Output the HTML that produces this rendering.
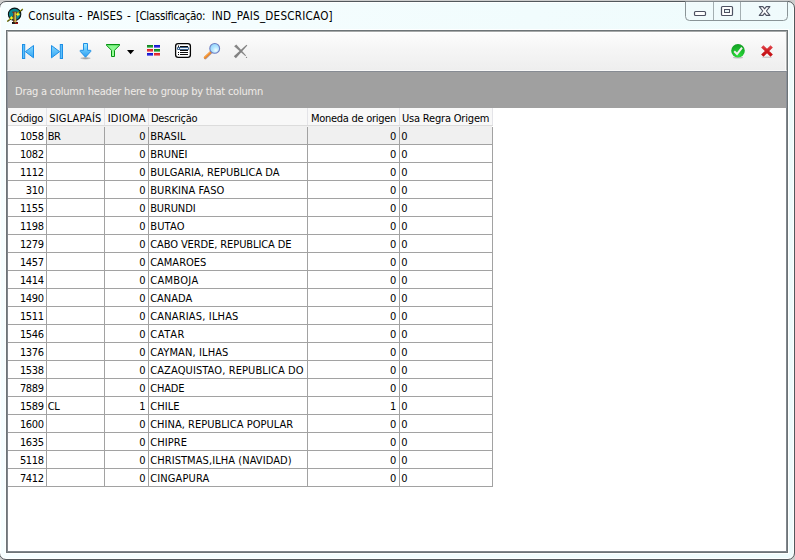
<!DOCTYPE html>
<html><head><meta charset="utf-8"><title>Consulta - PAISES</title>
<style>
html,body{margin:0;padding:0}
body{width:795px;height:560px;overflow:hidden;position:relative;background:#cdcdcd;font:11px/13px "DejaVu Sans Condensed","Liberation Sans",sans-serif;color:#000}
div,span,svg{position:absolute;box-sizing:border-box}
.t{white-space:pre;line-height:13px;height:13px}
#win{left:-1px;top:1px;width:796px;height:559px;border:1px solid #52585c;border-radius:7px;
 background:linear-gradient(100deg,#f6feff 0%,#f4fdfe 30%,#f1fcfd 60%,#eefbfc 100%);box-shadow:inset 0 0 0 1px rgba(255,255,255,.85)}
#client{left:6px;top:30px;width:782px;height:523px;border:1px solid #6d7477;background:#fff;box-shadow:0 0 0 1px rgba(255,255,255,.9)}
#tb{left:7px;top:31px;width:780px;height:40px;background:linear-gradient(#fdfdfd,#f6f6f6 40%,#eeeeee);border-left:1px solid #b6b8b8;border-right:1px solid #aeb0b0;border-bottom:1px solid #f8f8f8;border-top:1px solid #a6a9a9;box-shadow:inset -1px 0 0 #f8f8f8,inset 0 1px 0 #fff}
#gp{left:7px;top:71px;width:780px;height:37px;background:#a0a0a0;border-top:1px solid #868b93;border-left:1px solid #8a8f98;border-right:1px solid #8a8f98}
#grid{left:7px;top:108px;width:780px;height:444px;background:#fff;border-left:1px solid #80868c;border-right:1px solid #80868c;border-bottom:1px solid #80868c}
.hd{top:108px;height:17px;background:#f8f8f8;border-right:1px solid #e4e4e8}
.hl{left:8px;top:125px;width:485px;height:1px;background:#dcdcdc}
.vl{top:127px;width:1px;height:360px;background:#a2a2a2}
.rl{left:8px;width:485px;height:1px;background:#a2a2a2}
.num{text-align:right}
</style></head><body>

<div id="win"></div>
<div id="client"></div>
<div id="tb"></div><div id="gp"></div><div id="grid"></div>
<span class="t" style="left:28.2px;top:9px;letter-spacing:0.157px;font-size:11.6px;line-height:15px;height:15px">Consulta</span>
<span class="t" style="left:78.7px;top:9px;letter-spacing:0.834px;font-size:11.6px;line-height:15px;height:15px">-</span>
<span class="t" style="left:86.9px;top:9px;letter-spacing:0.041px;font-size:11.6px;line-height:15px;height:15px">PAISES</span>
<span class="t" style="left:126.9px;top:9px;letter-spacing:0.834px;font-size:11.6px;line-height:15px;height:15px">-</span>
<span class="t" style="left:135.7px;top:9px;letter-spacing:-0.374px;font-size:11.6px;line-height:15px;height:15px">[Classificação:</span>
<span class="t" style="left:211.7px;top:9px;letter-spacing:0.219px;font-size:11.6px;line-height:15px;height:15px">IND_PAIS_DESCRICAO]</span>
<svg style="left:684px;top:1px" width="106" height="22" viewBox="0 0 106 22">
<path d="M1.5 0.5 V15.5 Q1.5 19.5 5.5 19.5 H99.5 Q103.5 19.5 103.5 15.5 V0.5" fill="rgba(240,250,252,.6)" stroke="#8a9497" stroke-width="1"/>
<path d="M29.5 1 V19 M56.5 1 V19" stroke="#a4aeb1" stroke-width="1"/>
<rect x="10.5" y="10.5" width="11" height="4" rx="1" fill="#fff" stroke="#4e5262" stroke-width="1.2"/>
<rect x="37.500" y="5.500" width="11" height="9" rx="1" fill="#fff" stroke="#4e5262" stroke-width="1.2"/>
<rect x="40.5" y="8.5" width="5" height="3" fill="#e8f4f6" stroke="#4e5262" stroke-width="1"/>
<path d="M75.300 5.600 h3.600 l1.700 2.300 l1.700 -2.300 h3.600 l-3.500 4.400 l3.500 4.400 h-3.600 l-1.700 -2.300 l-1.700 2.300 h-3.600 l3.500 -4.400 z" fill="#fff" stroke="#4e5262" stroke-width="1.1" stroke-linejoin="round"/>
</svg>
<svg style="left:4px;top:5px" width="24" height="22" viewBox="4 5 24 22">
<circle cx="14.600" cy="14.300" r="6.200" fill="#0b8b92" stroke="#0a1416" stroke-width="1.100"/>
<path d="M7.300 21.600 L22.800 9.200" stroke="#2a2a00" stroke-width="1.300"/>
<path d="M7.300 21.300 L22.800 8.900" stroke="#c4c400" stroke-width=".9" stroke-dasharray="1.500 .8"/>
<rect x="12" y="22" width="6" height="1.900" fill="#0c0c0c"/>
<rect x="15.200" y="22.600" width="2.800" height="1.300" fill="#b41010"/>
<rect x="12.300" y="11.600" width="4.900" height="1.200" fill="#7a2414"/>
<rect x="13.200" y="12" width="1.500" height="10.400" fill="#7c3418"/>
<rect x="14.600" y="12.300" width="1.300" height="10.100" fill="#ece454"/>
<rect x="15.800" y="12.300" width=".6" height="10.100" fill="#a03818"/>
<path d="M11.500 15.900 l.8 1.300 l1.500 .7 l-1.500 .8 l-.8 1.400 l-.8 -1.400 l-1.500 -.8 l1.500 -.7z" fill="#fafa20"/>
<path d="M17.900 12.300 l.8 1.300 l1.500 .7 l-1.500 .8 l-.8 1.400 l-.8 -1.400 l-1.500 -.8 l1.500 -.7z" fill="#fafa20"/>
</svg>
<svg style="left:20px;top:42px" width="232" height="20" viewBox="20 42 232 20">
<defs>
<linearGradient id="bl" x1="0" y1="0" x2="0" y2="1"><stop offset="0" stop-color="#86d8ff"/><stop offset="1" stop-color="#34a6f4"/></linearGradient>
<linearGradient id="bl2" x1="0" y1="0" x2="0" y2="1"><stop offset="0" stop-color="#a8ecff"/><stop offset=".5" stop-color="#62c4fb"/><stop offset="1" stop-color="#2c9cf0"/></linearGradient>
<linearGradient id="gr" x1="0" y1="0" x2="0" y2="1"><stop offset="0" stop-color="#84f88c"/><stop offset="1" stop-color="#9cff9c"/></linearGradient>
<radialGradient id="lens" cx=".62" cy=".68" r=".75"><stop offset="0" stop-color="#f4fdff"/><stop offset=".45" stop-color="#b4e6ff"/><stop offset="1" stop-color="#8ed2fa"/></radialGradient>
</defs>
<!-- first -->
<rect x="22.500" y="44.500" width="2.200" height="14" fill="#5cc0fb" stroke="#1e8fe6" stroke-width="1"/>
<path d="M33.500 45.500 V57.800 L25.400 51.650 Z" fill="url(#bl)" stroke="#1e8fe6" stroke-width="1" stroke-linejoin="round"/>
<!-- last -->
<rect x="60.300" y="44.500" width="2.200" height="14" fill="#5cc0fb" stroke="#1e8fe6" stroke-width="1"/>
<path d="M51.500 45.500 V57.800 L59.600 51.650 Z" fill="url(#bl)" stroke="#1e8fe6" stroke-width="1" stroke-linejoin="round"/>
<!-- down arrow -->
<ellipse cx="85.500" cy="58.300" rx="5" ry="1.100" fill="#606060" opacity=".35"/><ellipse cx="85.500" cy="58.100" rx="3" ry=".7" fill="#505050" opacity=".35"/>
<path d="M83.500 43.500 H87.500 V50.300 H90.600 Q91.200 50.800 90.700 51.500 L85.500 57.200 L80.300 51.500 Q79.800 50.800 80.400 50.300 H83.500 Z" fill="url(#bl2)" stroke="#1e8fe6" stroke-width="1" stroke-linejoin="round"/>
<!-- funnel -->
<path d="M106.500 44.500 H119.500 V45.300 L114.500 50.300 V56.500 H111.500 V50.300 L106.500 45.300 Z" fill="url(#gr)" stroke="#079212" stroke-width="1" stroke-linejoin="miter"/>
<path d="M106.500 44.600 H119.500" stroke="#079212" stroke-width="1.200"/>
<path d="M127 50 H134.200 L130.600 54.200 Z" fill="#000"/>
<!-- grid icon -->
<rect x="147" y="45" width="6" height="3" fill="#108a20"/><rect x="154" y="45" width="6" height="3" fill="#1414d0"/>
<rect x="147" y="49" width="6" height="3" fill="#e02028"/><rect x="154" y="49" width="6" height="3" fill="#108a20"/>
<rect x="147" y="53" width="6" height="3" fill="#1414d0"/><rect x="154" y="53" width="6" height="3" fill="#e02028"/>
<rect x="147" y="46.800" width="6" height="1.200" fill="#6fc078"/><rect x="154" y="46.800" width="6" height="1.200" fill="#7070e8"/>
<rect x="147" y="50.800" width="6" height="1.200" fill="#f08088"/><rect x="154" y="50.800" width="6" height="1.200" fill="#6fc078"/>
<rect x="147" y="54.800" width="6" height="1.200" fill="#7070e8"/><rect x="154" y="54.800" width="6" height="1.200" fill="#f08088"/>
<!-- list icon -->
<rect x="174.800" y="42.800" width="16.400" height="15.400" rx="3.200" fill="#fff" opacity=".8"/>
<rect x="175.600" y="43.600" width="14.800" height="13.800" rx="2.600" fill="#fff" stroke="#050505" stroke-width="1.300"/>
<rect x="180" y="46" width="8" height="5" fill="#0a0a0a"/>
<rect x="178" y="45.500" width="1" height="1.500" fill="#202020"/>
<rect x="177" y="47" width="12" height="3" rx="1" fill="#3c6490"/>
<rect x="180" y="48" width="8" height="1" fill="#eef4fa"/>
<rect x="178" y="48" width="1" height="1" fill="#eef4fa"/>
<rect x="180" y="52" width="8" height="1" fill="#0a0a0a"/><rect x="178" y="52" width="1" height="1" fill="#0a0a0a"/>
<rect x="180" y="54" width="8" height="1" fill="#0a0a0a"/><rect x="178" y="54" width="1" height="1" fill="#0a0a0a"/>
<!-- magnifier -->
<path d="M211 52.600 L205.300 58.100" stroke="#6a5068" stroke-width="2.600" stroke-linecap="round" opacity=".55"/>
<path d="M210.700 52.100 L204.900 57.600" stroke="#f08a26" stroke-width="2.300" stroke-linecap="round"/>
<path d="M210.200 51.800 L204.600 57.100" stroke="#f8b060" stroke-width=".8" stroke-linecap="round"/>
<circle cx="214.700" cy="48.400" r="4.900" fill="url(#lens)" stroke="#6e7ec2" stroke-width="1.100"/>
<!-- gray X -->
<path d="M234.100 46.300 L236.300 44.500 L246.100 55.400 L245.300 56.100 Z" fill="#868686"/>
<path d="M233.800 56.200 L235.900 58.300 L247.300 45.500 L246.500 44.800 Z" fill="#828282"/>
<circle cx="246.500" cy="57.400" r=".65" fill="#8a8a8a"/>
</svg>
<svg style="left:728px;top:42px" width="50" height="20" viewBox="728 42 50 20">
<defs><radialGradient id="gc" cx=".5" cy=".85" r=".9"><stop offset="0" stop-color="#2ce03c"/><stop offset=".55" stop-color="#1cb82c"/><stop offset="1" stop-color="#129a24"/></radialGradient><linearGradient id="rx" x1="0" y1="0" x2="0" y2="1"><stop offset="0" stop-color="#e0444a"/><stop offset=".5" stop-color="#cc1a1e"/><stop offset="1" stop-color="#c41014"/></linearGradient></defs>
<ellipse cx="738" cy="57.600" rx="5" ry="1" fill="#909090" opacity=".5"/>
<circle cx="738" cy="50.700" r="6.800" fill="url(#gc)"/>
<path d="M734.200 51.300 L737 54 L742 47.600" fill="none" stroke="#f6eef2" stroke-width="2"/>
<ellipse cx="767" cy="57.300" rx="5" ry=".8" fill="#909090" opacity=".4"/>
<path d="M762.300 46.300 L771.700 55.700 M771.700 46.300 L762.300 55.700" stroke="url(#rx)" stroke-width="3.300"/>
</svg>
<span class="t" style="left:15.0px;top:85px;letter-spacing:-0.231px;color:#efebe7">Drag a column header here to group by that column</span>
<div class="hd" style="left:8px;width:39px"></div>
<div class="hd" style="left:47px;width:58px"></div>
<div class="hd" style="left:105px;width:44px"></div>
<div class="hd" style="left:149px;width:159px"></div>
<div class="hd" style="left:308px;width:92px"></div>
<div class="hd" style="left:400px;width:93px"></div>
<div class="hl"></div>
<span class="t" style="left:10.3px;top:112px;letter-spacing:-0.269px;">Código</span>
<span class="t" style="left:49.3px;top:112px;letter-spacing:0.170px;">SIGLAPAÍS</span>
<span class="t" style="left:107.7px;top:112px;letter-spacing:0.268px;">IDIOMA</span>
<span class="t" style="left:150.9px;top:112px;letter-spacing:-0.248px;">Descrição</span>
<span class="t" style="left:311.0px;top:112px;letter-spacing:-0.279px;">Moneda de origen</span>
<span class="t" style="left:401.9px;top:112px;letter-spacing:-0.178px;">Usa Regra Origem</span>
<div style="left:47px;top:126px;width:445px;height:18px;background:#f0f0f0"></div>
<div class="vl" style="left:46px"></div>
<div class="vl" style="left:104px"></div>
<div class="vl" style="left:148px"></div>
<div class="vl" style="left:307px"></div>
<div class="vl" style="left:399px"></div>
<div class="vl" style="left:492px"></div>
<div class="rl" style="top:144px"></div>
<div class="rl" style="top:162px"></div>
<div class="rl" style="top:180px"></div>
<div class="rl" style="top:198px"></div>
<div class="rl" style="top:216px"></div>
<div class="rl" style="top:234px"></div>
<div class="rl" style="top:252px"></div>
<div class="rl" style="top:270px"></div>
<div class="rl" style="top:288px"></div>
<div class="rl" style="top:306px"></div>
<div class="rl" style="top:324px"></div>
<div class="rl" style="top:342px"></div>
<div class="rl" style="top:360px"></div>
<div class="rl" style="top:378px"></div>
<div class="rl" style="top:396px"></div>
<div class="rl" style="top:414px"></div>
<div class="rl" style="top:432px"></div>
<div class="rl" style="top:450px"></div>
<div class="rl" style="top:468px"></div>
<div class="rl" style="top:486px"></div>
<span class="t num" style="left:8px;width:35.700px;top:130px;letter-spacing:-.35px">1058</span>
<span class="t" style="left:47.800px;top:130px;letter-spacing:-.5px">BR</span>
<span class="t num" style="left:105px;width:40.500px;top:130px">0</span>
<span class="t" style="left:150.2px;top:130px;letter-spacing:0.119px;">BRASIL</span>
<span class="t num" style="left:308px;width:88.400px;top:130px">0</span>
<span class="t" style="left:401.200px;top:130px">0</span>
<span class="t num" style="left:8px;width:35.700px;top:148px;letter-spacing:-.35px">1082</span>
<span class="t num" style="left:105px;width:40.500px;top:148px">0</span>
<span class="t" style="left:150.2px;top:148px;letter-spacing:-0.037px;">BRUNEI</span>
<span class="t num" style="left:308px;width:88.400px;top:148px">0</span>
<span class="t" style="left:401.200px;top:148px">0</span>
<span class="t num" style="left:8px;width:35.700px;top:166px;letter-spacing:-.35px">1112</span>
<span class="t num" style="left:105px;width:40.500px;top:166px">0</span>
<span class="t" style="left:150.2px;top:166px;letter-spacing:-0.005px;">BULGARIA, REPUBLICA DA</span>
<span class="t num" style="left:308px;width:88.400px;top:166px">0</span>
<span class="t" style="left:401.200px;top:166px">0</span>
<span class="t num" style="left:8px;width:35.700px;top:184px;letter-spacing:-.35px">310</span>
<span class="t num" style="left:105px;width:40.500px;top:184px">0</span>
<span class="t" style="left:150.2px;top:184px;letter-spacing:0.095px;">BURKINA FASO</span>
<span class="t num" style="left:308px;width:88.400px;top:184px">0</span>
<span class="t" style="left:401.200px;top:184px">0</span>
<span class="t num" style="left:8px;width:35.700px;top:202px;letter-spacing:-.35px">1155</span>
<span class="t num" style="left:105px;width:40.500px;top:202px">0</span>
<span class="t" style="left:150.2px;top:202px;letter-spacing:-0.118px;">BURUNDI</span>
<span class="t num" style="left:308px;width:88.400px;top:202px">0</span>
<span class="t" style="left:401.200px;top:202px">0</span>
<span class="t num" style="left:8px;width:35.700px;top:220px;letter-spacing:-.35px">1198</span>
<span class="t num" style="left:105px;width:40.500px;top:220px">0</span>
<span class="t" style="left:150.2px;top:220px;letter-spacing:0.177px;">BUTAO</span>
<span class="t num" style="left:308px;width:88.400px;top:220px">0</span>
<span class="t" style="left:401.200px;top:220px">0</span>
<span class="t num" style="left:8px;width:35.700px;top:238px;letter-spacing:-.35px">1279</span>
<span class="t num" style="left:105px;width:40.500px;top:238px">0</span>
<span class="t" style="left:150.2px;top:238px;letter-spacing:-0.092px;">CABO VERDE, REPUBLICA DE</span>
<span class="t num" style="left:308px;width:88.400px;top:238px">0</span>
<span class="t" style="left:401.200px;top:238px">0</span>
<span class="t num" style="left:8px;width:35.700px;top:256px;letter-spacing:-.35px">1457</span>
<span class="t num" style="left:105px;width:40.500px;top:256px">0</span>
<span class="t" style="left:150.2px;top:256px;letter-spacing:-0.012px;">CAMAROES</span>
<span class="t num" style="left:308px;width:88.400px;top:256px">0</span>
<span class="t" style="left:401.200px;top:256px">0</span>
<span class="t num" style="left:8px;width:35.700px;top:274px;letter-spacing:-.35px">1414</span>
<span class="t num" style="left:105px;width:40.500px;top:274px">0</span>
<span class="t" style="left:150.2px;top:274px;letter-spacing:0.315px;">CAMBOJA</span>
<span class="t num" style="left:308px;width:88.400px;top:274px">0</span>
<span class="t" style="left:401.200px;top:274px">0</span>
<span class="t num" style="left:8px;width:35.700px;top:292px;letter-spacing:-.35px">1490</span>
<span class="t num" style="left:105px;width:40.500px;top:292px">0</span>
<span class="t" style="left:150.2px;top:292px;letter-spacing:-0.009px;">CANADA</span>
<span class="t num" style="left:308px;width:88.400px;top:292px">0</span>
<span class="t" style="left:401.200px;top:292px">0</span>
<span class="t num" style="left:8px;width:35.700px;top:310px;letter-spacing:-.35px">1511</span>
<span class="t num" style="left:105px;width:40.500px;top:310px">0</span>
<span class="t" style="left:150.2px;top:310px;letter-spacing:0.164px;">CANARIAS, ILHAS</span>
<span class="t num" style="left:308px;width:88.400px;top:310px">0</span>
<span class="t" style="left:401.200px;top:310px">0</span>
<span class="t num" style="left:8px;width:35.700px;top:328px;letter-spacing:-.35px">1546</span>
<span class="t num" style="left:105px;width:40.500px;top:328px">0</span>
<span class="t" style="left:150.2px;top:328px;letter-spacing:0.657px;">CATAR</span>
<span class="t num" style="left:308px;width:88.400px;top:328px">0</span>
<span class="t" style="left:401.200px;top:328px">0</span>
<span class="t num" style="left:8px;width:35.700px;top:346px;letter-spacing:-.35px">1376</span>
<span class="t num" style="left:105px;width:40.500px;top:346px">0</span>
<span class="t" style="left:150.2px;top:346px;letter-spacing:0.117px;">CAYMAN, ILHAS</span>
<span class="t num" style="left:308px;width:88.400px;top:346px">0</span>
<span class="t" style="left:401.200px;top:346px">0</span>
<span class="t num" style="left:8px;width:35.700px;top:364px;letter-spacing:-.35px">1538</span>
<span class="t num" style="left:105px;width:40.500px;top:364px">0</span>
<span class="t" style="left:150.2px;top:364px;letter-spacing:0.105px;">CAZAQUISTAO, REPUBLICA DO</span>
<span class="t num" style="left:308px;width:88.400px;top:364px">0</span>
<span class="t" style="left:401.200px;top:364px">0</span>
<span class="t num" style="left:8px;width:35.700px;top:382px;letter-spacing:-.35px">7889</span>
<span class="t num" style="left:105px;width:40.500px;top:382px">0</span>
<span class="t" style="left:150.2px;top:382px;letter-spacing:-0.175px;">CHADE</span>
<span class="t num" style="left:308px;width:88.400px;top:382px">0</span>
<span class="t" style="left:401.200px;top:382px">0</span>
<span class="t num" style="left:8px;width:35.700px;top:400px;letter-spacing:-.35px">1589</span>
<span class="t" style="left:47.800px;top:400px;letter-spacing:-.5px">CL</span>
<span class="t num" style="left:105px;width:40.500px;top:400px">1</span>
<span class="t" style="left:150.2px;top:400px;letter-spacing:0.063px;">CHILE</span>
<span class="t num" style="left:308px;width:88.400px;top:400px">1</span>
<span class="t" style="left:401.200px;top:400px">0</span>
<span class="t num" style="left:8px;width:35.700px;top:418px;letter-spacing:-.35px">1600</span>
<span class="t num" style="left:105px;width:40.500px;top:418px">0</span>
<span class="t" style="left:150.2px;top:418px;letter-spacing:0.022px;">CHINA, REPUBLICA POPULAR</span>
<span class="t num" style="left:308px;width:88.400px;top:418px">0</span>
<span class="t" style="left:401.200px;top:418px">0</span>
<span class="t num" style="left:8px;width:35.700px;top:436px;letter-spacing:-.35px">1635</span>
<span class="t num" style="left:105px;width:40.500px;top:436px">0</span>
<span class="t" style="left:150.2px;top:436px;letter-spacing:0.105px;">CHIPRE</span>
<span class="t num" style="left:308px;width:88.400px;top:436px">0</span>
<span class="t" style="left:401.200px;top:436px">0</span>
<span class="t num" style="left:8px;width:35.700px;top:454px;letter-spacing:-.35px">5118</span>
<span class="t num" style="left:105px;width:40.500px;top:454px">0</span>
<span class="t" style="left:150.2px;top:454px;letter-spacing:0.074px;">CHRISTMAS,ILHA (NAVIDAD)</span>
<span class="t num" style="left:308px;width:88.400px;top:454px">0</span>
<span class="t" style="left:401.200px;top:454px">0</span>
<span class="t num" style="left:8px;width:35.700px;top:472px;letter-spacing:-.35px">7412</span>
<span class="t num" style="left:105px;width:40.500px;top:472px">0</span>
<span class="t" style="left:150.2px;top:472px;letter-spacing:0.128px;">CINGAPURA</span>
<span class="t num" style="left:308px;width:88.400px;top:472px">0</span>
<span class="t" style="left:401.200px;top:472px">0</span>
</body></html>
